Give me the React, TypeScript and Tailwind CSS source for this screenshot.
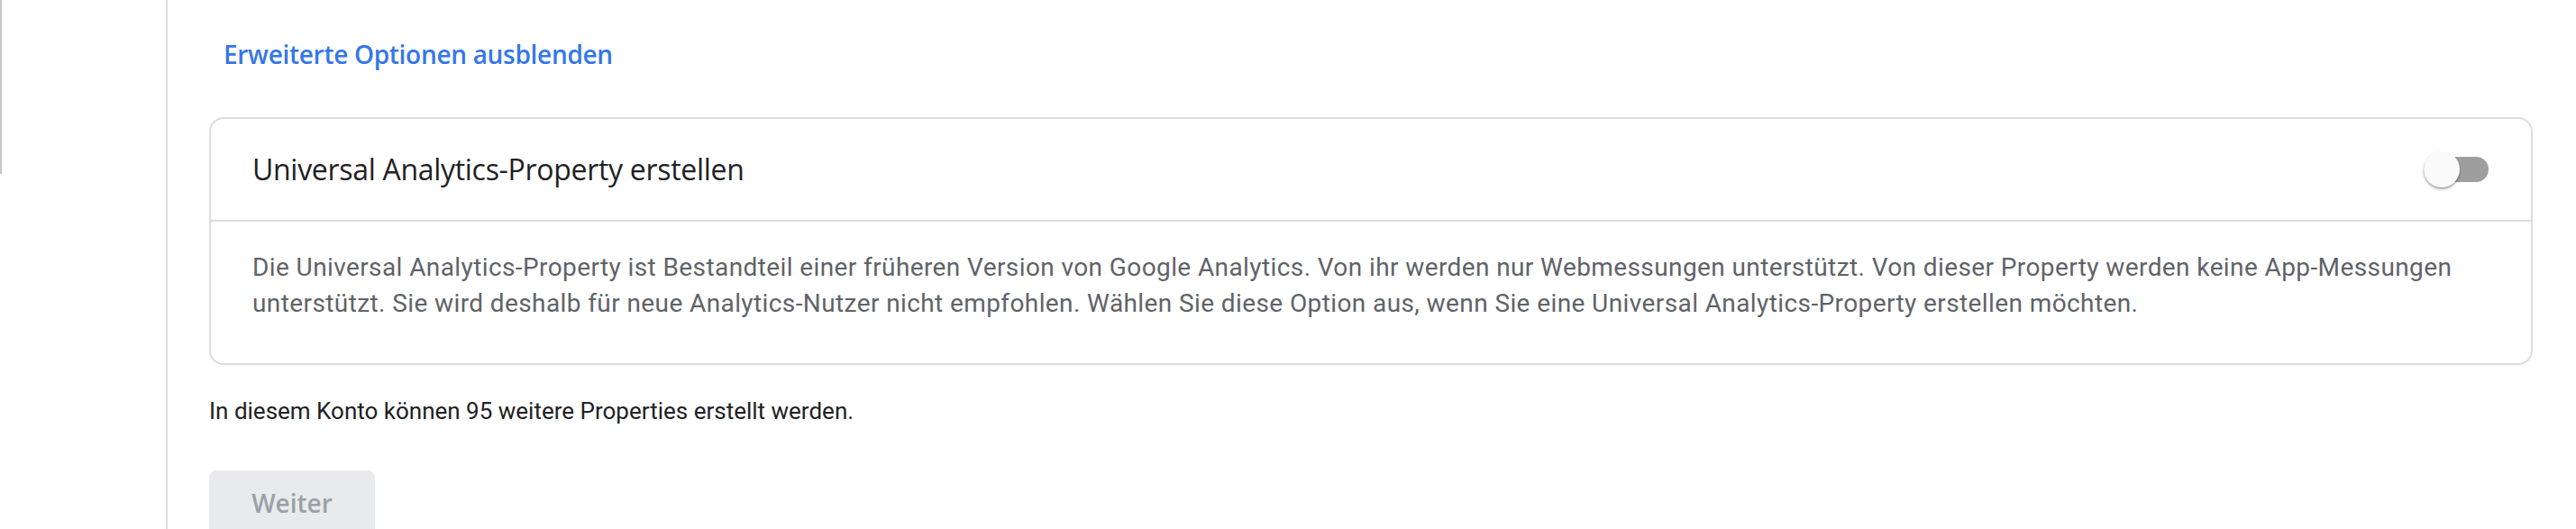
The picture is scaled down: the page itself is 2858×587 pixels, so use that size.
import React from 'react';

const headingFont = { fontFamily: '"Open Sans", Roboto, sans-serif' };

function Toggle() {
  return (
    <div className="relative w-[72px] h-[40px] flex items-center" aria-hidden="true">
      <div className="w-[72px] h-[28px] rounded-full bg-[#9e9e9e]" />
      <div className="absolute left-0 top-0 w-[40px] h-[40px] rounded-full bg-[#fafafa] shadow-[0_2px_3px_rgba(0,0,0,0.3),0_1px_1px_rgba(0,0,0,0.14)]" />
    </div>
  );
}

export default function App() {
  return (
    <div className="flex h-[587px] w-full overflow-hidden bg-white font-['Roboto',sans-serif]">
      <div className="w-[184px] shrink-0">
        <div className="w-[2px] h-[193px] bg-[#c8c8c8]" />
      </div>
      <main className="flex-1 border-l-2 border-[#dadce0] pl-[46px] pr-[48px]">
        <div className="pt-[40px]">
          <button
            className="px-[16px] text-[28px] leading-[40px] font-semibold text-[#3577e6] tracking-[-0.3px]"
            style={headingFont}
          >
            Erweiterte Optionen ausblenden
          </button>
        </div>

        <section className="mt-[50px] border-2 border-[#dadce0] rounded-[16px]">
          <div className="h-[112px] flex items-center justify-between pl-[46px] pr-[47px]">
            <h2 className="text-[32px] text-[#202124] tracking-[-0.3px]" style={headingFont}>
              Universal Analytics-Property erstellen
            </h2>
            <Toggle />
          </div>
          <div className="border-t-2 border-[#dadce0] pl-[46px] pr-[46px] pt-[31px] pb-[46px]">
            <p className="text-[28px] leading-[40px] tracking-[0.4px] text-[#5f6368]">
              Die Universal Analytics-Property ist Bestandteil einer früheren Version von Google Analytics. Von ihr werden nur Webmessungen unterstützt. Von dieser Property werden keine App-Messungen unterstützt. Sie wird deshalb für neue Analytics-Nutzer nicht empfohlen. Wählen Sie diese Option aus, wenn Sie eine Universal Analytics-Property erstellen möchten.
            </p>
          </div>
        </section>

        <p className="mt-[31px] text-[26px] leading-[40px] text-[#202124]">
          In diesem Konto können 95 weitere Properties erstellt werden.
        </p>

        <button
          disabled
          className="mt-[46px] w-[184px] h-[72px] rounded-[8px] bg-[#e8eaed] text-[28px] font-semibold text-[#9aa0a6]"
          style={headingFont}
        >
          Weiter
        </button>
      </main>
    </div>
  );
}
